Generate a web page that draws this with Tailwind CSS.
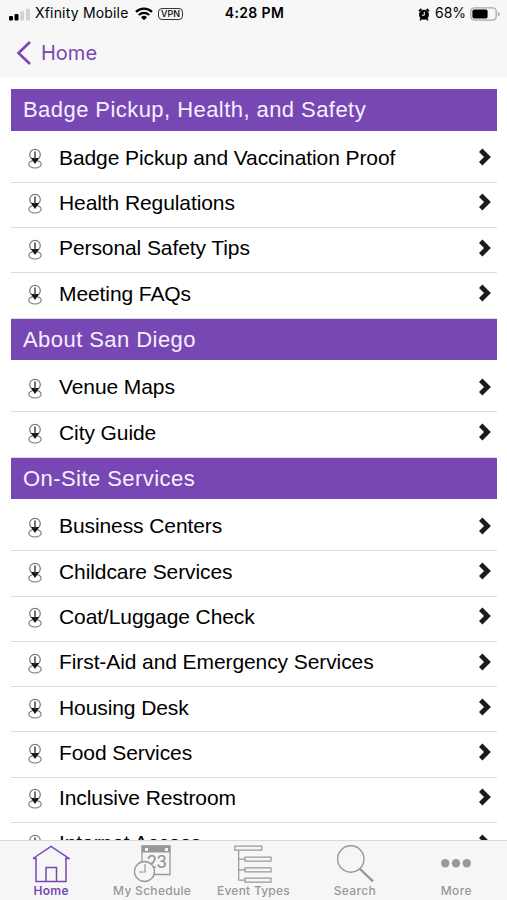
<!DOCTYPE html>
<html lang="en">
<head>
    <meta charset="UTF-8">
    <meta name="viewport" content="width=device-width, initial-scale=1.0">
    <title>Attendee Info</title>
    <script src="https://cdn.jsdelivr.net/npm/@tailwindcss/browser@4"></script>
</head>
<body class="bg-white font-['Liberation_Sans',sans-serif] text-black">
    <!-- Shared icons -->
    <svg class="hidden">
        <symbol id="pin" viewBox="0 0 16 22">
            <ellipse cx="8" cy="16.2" rx="6.2" ry="3.8" fill="none" stroke="#777" stroke-width="1.1"/>
            <circle cx="8" cy="6.6" r="5.3" fill="#fff" stroke="#777" stroke-width="1.2"/>
            <path d="M4 10h8l-4 6z" fill="#111"/>
            <path d="M8 3.4v8" stroke="#444" stroke-width="1.5"/>
        </symbol>
        <symbol id="chevron" viewBox="0 0 14 18">
            <path d="M2.7 2.2l6.8 6.8-6.8 6.8" fill="none" stroke="#1c1c1c" stroke-width="4.8"/>
        </symbol>
    </svg>

    <div class="flex h-[900px] w-[507px] flex-col overflow-hidden">
        <header class="h-[78px] shrink-0 bg-[#f7f7f7]">
            <!-- Status bar -->
            <div class="grid h-7 grid-cols-[1fr_auto_1fr] items-center pr-[7px] pl-[9px] font-[Inter,sans-serif] text-[14px]/[20px]">
                <div class="flex items-center">
                    <svg class="mr-[5px] h-[13px] w-[21px]" viewBox="0 0 21 13">
                        <rect x="0" y="8" width="4" height="4.5" rx="1"/>
                        <rect x="5.5" y="6" width="4" height="6.5" rx="1"/>
                        <rect x="11.2" y="3.2" width="4" height="9.3" rx="1" fill="#d2d2d2"/>
                        <rect x="17" y="0.4" width="4" height="12.1" rx="1" fill="#d2d2d2"/>
                    </svg>
                    <span class="w-[94px] pb-[2px] tracking-[0.18px] whitespace-nowrap">Xfinity Mobile</span>
                    <svg class="ml-[6px] h-[14px] w-[18px]" viewBox="0 0 18 14" fill="none" stroke="#000" stroke-width="2.3">
                        <path d="M1 4.8a11.6 11.6 0 0 1 16 0M3.9 8a7.4 7.4 0 0 1 10.2 0"/>
                        <path d="M6 10.2a4.3 4.3 0 0 1 6 0L9 13.3z" fill="#000" stroke="none"/>
                    </svg>
                    <span class="ml-[5px] flex h-[12px] w-[25px] items-center justify-center rounded-[4px] border border-[#333] text-[9px] font-medium">VPN</span>
                </div>
                <div class="pb-[2px] font-semibold tracking-[0.35px]">4:28 PM</div>
                <div class="flex items-center justify-end">
                    <svg class="mr-[5px] h-[13px] w-[12px]" viewBox="0 0 12 13">
                        <path d="M1 3.2L3.4 1M11 3.2L8.6 1M2.2 12.3l1.5-2M9.8 12.3l-1.5-2" stroke="#000" stroke-width="1.8"/>
                        <circle cx="6" cy="6.8" r="5"/>
                        <path d="M6.3 3.8v3.4H3.8" fill="none" stroke="#fff" stroke-width="1"/>
                    </svg>
                    <span class="w-[32px] pb-[2px] whitespace-nowrap">68%</span>
                    <svg class="ml-[3px] h-[14px] w-[30px]" viewBox="0 0 30 14">
                        <rect x="0.8" y="0.8" width="25.4" height="12.4" rx="3.6" fill="none" stroke="#aaa" stroke-width="1.3"/>
                        <rect x="2.4" y="2.4" width="15.2" height="9.2" rx="1.8"/>
                        <path d="M27.8 4.8v4.6q2-.6 2-2.3t-2-2.3" fill="#aaa"/>
                    </svg>
                </div>
            </div>
            <!-- Back link -->
            <a href="#" class="flex h-[49px] items-center pl-4 text-[#7748b4]">
                <svg class="h-6 w-4" viewBox="0 0 16 24" fill="none" stroke="currentColor" stroke-width="2.6"><path d="M14 1L2.5 12 14 23"/></svg>
                <span class="ml-[9px] font-[Inter,sans-serif] text-[20px]">Home</span>
            </a>
        </header>

        <main id="list" class="min-h-0 flex-1 overflow-hidden px-[11px] pt-[11px] pr-[10px]"></main>

        <!-- Tab bar -->
        <nav class="grid h-[60px] shrink-0 grid-cols-5 border-t border-[#d9d9d9] bg-[#f6f6f6] font-[Inter,sans-serif] text-[12px]/[16px] font-medium tracking-[0.35px] text-[#989898]">
            <a href="#" class="flex flex-col items-center pl-px font-semibold text-[#7748b4]">
                <svg class="mt-[3px] h-[39px] w-[38px]" viewBox="0 0 38 39" fill="none" stroke="currentColor" stroke-width="1.5">
                    <path d="M4 14v23.5h30V14M1 14.5L19 2.3l18 12.2H33M1 14.5h4M14 37.5V23.5h10.5v14"/>
                </svg>
                <span>Home</span>
            </a>
            <a href="#" class="flex flex-col items-center">
                <svg class="mt-[3px] h-[39px] w-[38px]" viewBox="0 0 38 39" fill="none" stroke="#989898">
                    <path d="M9 2h28v28.5H9z" stroke-width="1.3"/>
                    <path d="M9 2h28v6H9z" fill="#989898"/>
                    <path d="M12 4h3v3h-3zM32 4h3v3h-3z" fill="#f6f6f6" stroke="none"/>
                    <text x="13.5" y="24" font-size="17" fill="#989898" stroke="none" letter-spacing="-0.8">23</text>
                    <circle cx="11.5" cy="27.5" r="10" fill="#f6f6f6" stroke-width="1.3"/>
                    <path d="M12 20v8H6" stroke-width="1.2"/>
                </svg>
                <span class="tracking-[0.3px]">My Schedule</span>
            </a>
            <a href="#" class="flex flex-col items-center">
                <svg class="mt-[3px] h-[39px] w-[38px]" viewBox="0 0 38 39" fill="none" stroke="#989898" stroke-width="1.2">
                    <path d="M.8 2.2h27v4h-27zM11 13.2h26v4H11zM11 23.8h26v4H11zM11 34.2h26v4H11zM4.7 6.2v30H11M4.7 15.2H11M4.7 25.8H11"/>
                </svg>
                <span class="tracking-[0.25px]">Event Types</span>
            </a>
            <a href="#" class="flex flex-col items-center">
                <svg class="mt-[3px] h-[39px] w-[38px]" viewBox="0 0 38 39" fill="none" stroke="#989898">
                    <circle cx="14.8" cy="15" r="13.2" stroke-width="1.4"/>
                    <path d="M24 25l13 12.4" stroke-width="2.4"/>
                </svg>
                <span>Search</span>
            </a>
            <a href="#" class="flex flex-col items-center">
                <svg class="mt-[3px] h-[39px] w-[38px]" viewBox="0 0 38 39" fill="#989898">
                    <circle cx="8.2" cy="19.3" r="4.2"/><circle cx="19" cy="19.3" r="4.2"/><circle cx="29.8" cy="19.3" r="4.2"/>
                </svg>
                <span>More</span>
            </a>
        </nav>
    </div>

    <script>
        const sections = [
            { title: 'Badge Pickup, Health, and Safety', items: ['Badge Pickup and Vaccination Proof', 'Health Regulations', 'Personal Safety Tips', 'Meeting FAQs'] },
            { title: 'About San Diego', items: ['Venue Maps', 'City Guide'] },
            { title: 'On-Site Services', items: ['Business Centers', 'Childcare Services', 'Coat/Luggage Check', 'First-Aid and Emergency Services', 'Housing Desk', 'Food Services', 'Inclusive Restroom', 'Internet Access'] }
        ];

        document.getElementById('list').innerHTML = sections.map(section => `
            <section>
                <h2 class="mb-[7px] flex h-[41.5px] items-center bg-[#7748b4] pl-3 text-[22px] tracking-[0.44px] text-[#f6efff]">${section.title}</h2>
                <ul>
                    ${section.items.map(item => `
                        <li class="flex h-[45.27px] items-center border-b border-[#dcdcdc] pb-1 pl-4">
                            <svg class="mt-[3px] h-[22px] w-4"><use href="#pin"/></svg>
                            <span class="ml-4 flex-1 text-[21px] tracking-[-0.09px]">${item}</span>
                            <svg class="mr-[5px] mb-px h-[18px] w-[14px]"><use href="#chevron"/></svg>
                        </li>`).join('')}
                </ul>
            </section>`).join('');
    </script>
</body>
</html>
